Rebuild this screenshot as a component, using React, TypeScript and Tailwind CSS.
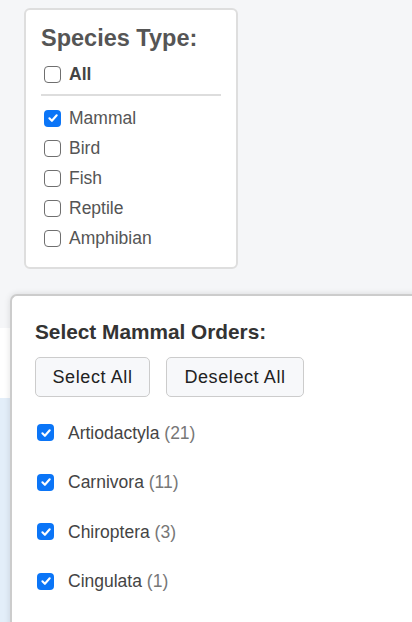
import React from "react";

function Box({ checked }: { checked: boolean }) {
  if (checked) {
    return (
      <span className="flex h-[17px] w-[17px] shrink-0 items-center justify-center rounded-[4px] bg-[#0b75f7]">
        <svg width="12" height="12" viewBox="0 0 12 12" fill="none">
          <path d="M2.4 6.3 L4.9 8.8 L9.7 3.3" stroke="white" strokeWidth="2.1" strokeLinecap="round" strokeLinejoin="round" />
        </svg>
      </span>
    );
  }
  return <span className="h-[17px] w-[17px] shrink-0 rounded-[4px] border-[1.5px] border-[#6f6f6f] bg-white" />;
}

const species = [
  { name: "Mammal", checked: true },
  { name: "Bird", checked: false },
  { name: "Fish", checked: false },
  { name: "Reptile", checked: false },
  { name: "Amphibian", checked: false },
];

const orders = [
  { name: "Artiodactyla", n: 21 },
  { name: "Carnivora", n: 11 },
  { name: "Chiroptera", n: 3 },
  { name: "Cingulata", n: 1 },
];

export default function App() {
  return (
    <div
      className="relative h-[622px] w-[412px] overflow-hidden bg-[#f5f6f8]"
      style={{ fontFamily: '"Liberation Sans", Arial, sans-serif' }}
    >
      <div className="pl-[24px] pt-[8px]">
        <div className="w-[214px] rounded-[6px] border-2 border-[#dedede] bg-white px-[15px] pb-[14px] pt-[15px]">
          <div className="text-[23.5px] font-bold leading-[26px] text-[#555555]">Species Type:</div>
          <div className="mt-[8px] flex h-[30px] items-center gap-[8px] pl-[3px]">
            <Box checked={false} />
            <span className="text-[17.5px] font-bold text-[#444444]">All</span>
          </div>
          <div className="mt-[5px] h-[2px] w-[180px] bg-[#dddddd]" />
          <div className="mt-[7px] flex flex-col">
            {species.map((s) => (
              <div key={s.name} className="flex h-[30px] items-center gap-[8px] pl-[3px]">
                <Box checked={s.checked} />
                <span className="text-[17.5px] text-[#555555]">{s.name}</span>
              </div>
            ))}
          </div>
        </div>
      </div>
      <div className="mt-[59px] h-[70px] bg-white" />
      <div className="h-[300px] bg-[#e3eef9]" />

      <div className="absolute left-[10px] top-[294px] h-[360px] w-[430px] rounded-tl-[7px] border-l-2 border-t-2 border-[#cccccc] bg-white pl-[23px] pt-[24px] shadow-[0_0_6px_rgba(0,0,0,0.12)]">
        <div className="text-[20.8px] font-bold leading-[24px] text-[#333333]">Select Mammal Orders:</div>
        <div className="mt-[13px] flex gap-[16px]">
          <button className="h-[40px] w-[115px] rounded-[5px] border-[1.5px] border-[#cccccc] bg-[#f7f8fa] text-[18px] tracking-[0.6px] text-[#222222]">
            Select All
          </button>
          <button className="h-[40px] w-[138px] rounded-[5px] border-[1.5px] border-[#cccccc] bg-[#f7f8fa] text-[18px] tracking-[0.6px] text-[#222222]">
            Deselect All
          </button>
        </div>
        <div className="mt-[11px] flex flex-col">
          {orders.map((o) => (
            <div key={o.name} className="flex h-[49.5px] items-center gap-[14px] pl-[2px]">
              <Box checked={true} />
              <span className="text-[17.5px] text-[#444444]">
                {o.name} <span className="text-[#777777]">({o.n})</span>
              </span>
            </div>
          ))}
        </div>
      </div>
    </div>
  );
}
